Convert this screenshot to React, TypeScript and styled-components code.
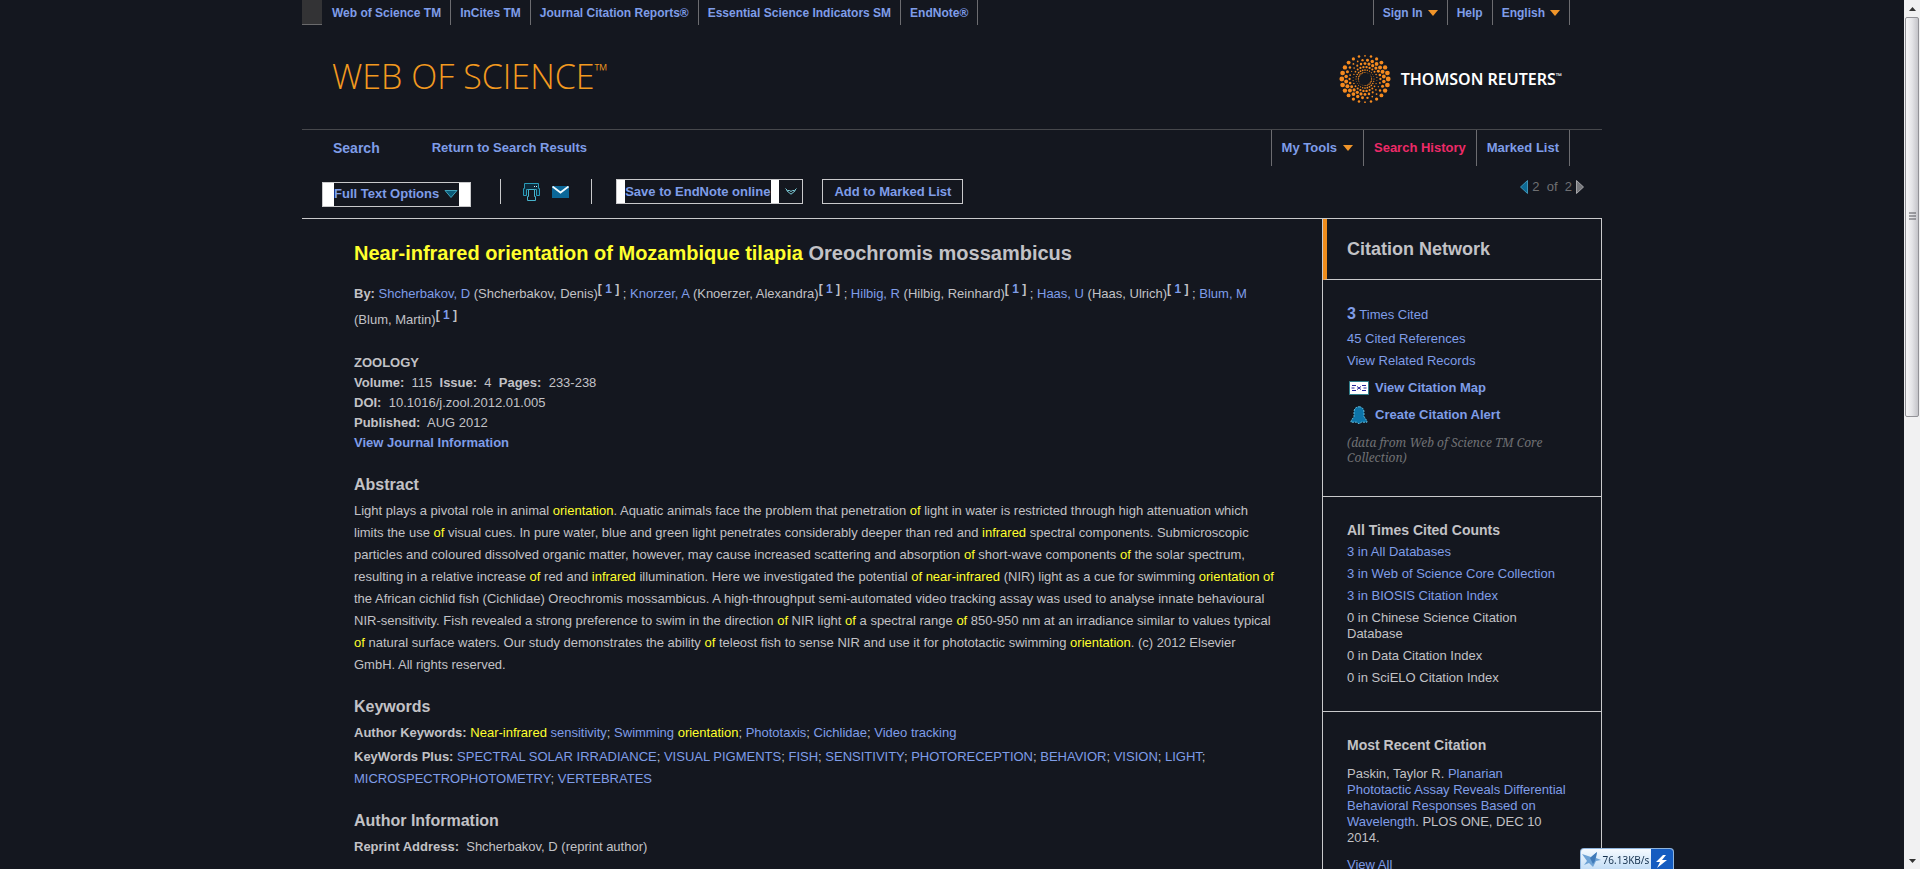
import React from "react";
import styled, { createGlobalStyle, css } from "styled-components";

const link = "#7f9de8";
const line = "#c9c9cb";
const dim = "#6f7073";

const GlobalStyle = createGlobalStyle`
  *, *::before, *::after { box-sizing: border-box; }
  body {
    margin: 0;
    background: #14171f;
    color: #c2c2c6;
    font: 13px/20px "Liberation Sans", Arial, sans-serif;
  }
  a { color: ${link}; text-decoration: none; }
  button { font: inherit; color: inherit; background: none; border: 0; padding: 0; cursor: pointer; }
  h1, h2, h3, p, ul { margin: 0; padding: 0; }
  ul { list-style: none; }
`;

const Window = styled.div`
  display: grid;
  grid-template-columns: minmax(0, 1fr) 16px;
  height: 100vh;
  overflow: hidden;
`;

const Viewport = styled.div`
  overflow: hidden;
`;

const Page = styled.div`
  width: 100%;
  max-width: 1300px;
  margin: 0 auto;
`;

const barItem = css`
  display: flex;
  align-items: center;
  gap: 6px;
  padding: 0 10px;
  color: ${link};
  white-space: nowrap;
  border-right: 1px solid #6c6c70;
`;

const BarLink = styled.a`
  ${barItem}
`;

const BarButton = styled.button`
  ${barItem}
`;

const TopBar = styled.div`
  display: flex;
  height: 25px;
  font-size: 12px;
  font-weight: bold;

  ${BarLink}, ${BarButton} {
    gap: 5px;
    padding: 0 9px;
  }
`;

const TopStub = styled.span`
  width: 20px;
  margin-right: 1px;
  background: #333335;
  border-bottom: 1px solid #6a6a6c;
`;

const RightGroup = styled.div`
  display: flex;
  margin-left: auto;
  margin-right: 32px;
  border-left: 1px solid #6c6c70;
`;

const Masthead = styled.header`
  display: flex;
  justify-content: space-between;
  align-items: flex-start;
  height: 105px;
  padding: 28px 40px 0 30px;
  border-bottom: 1px solid #47484c;
`;

const Product = styled.div`
  display: flex;
  color: #f39a1f;
  font: 300 34px/46px "Open Sans", "Noto Sans", sans-serif;

  sup { font-size: 18px; line-height: 34px; }
`;

const Company = styled.div`
  display: flex;
  align-items: center;
  gap: 10px;
  color: #fff;
  font: 600 16px/20px "Noto Sans", "Open Sans", sans-serif;

  sup { font-size: 8px; line-height: 8px; }
`;

const Nav = styled.nav`
  display: flex;
  height: 36px;
  font-weight: bold;
`;

const NavLink = styled.a<{ $size?: number }>`
  display: flex;
  align-items: center;
  margin-right: 52px;
  font-size: ${(p) => p.$size ?? 13}px;

  &:first-child { margin-left: 31px; }
`;

const HistoryLink = styled(BarLink)`
  color: #ee2a68;
`;

const Toolbar = styled.div`
  display: flex;
  align-items: center;
  height: 53px;
  padding: 0 18px 1px 20px;
  color: ${link};
  font-weight: bold;
  border-bottom: 1px solid ${line};
`;

const Box = styled.div`
  display: flex;
  height: 25px;
  border: 1px solid ${line};
`;

const FullText = styled(Box)`
  margin-top: 5px;
`;

const Blocked = styled.button<{ $edge: number }>`
  display: flex;
  align-items: center;
  gap: 5px;
  padding: 0 1px 0 0;
  white-space: nowrap;
  border: solid #fff;
  border-width: 0 ${(p) => p.$edge}px;
`;

const SplitArrow = styled.button`
  display: grid;
  place-items: center;
  width: 23px;
`;

const PlainButton = styled.button`
  padding: 0 11px;
  white-space: nowrap;
`;

const IconGroup = styled.div`
  display: flex;
  align-items: center;
  gap: 12px;
  height: 25px;
  margin: 0 24px 0 29px;
  padding: 0 22px;
  border: solid ${line};
  border-width: 0 1px;
`;

const IconButton = styled.button`
  display: flex;
`;

const SaveBox = styled(Box)`
  margin-right: 19px;
`;

const Pager = styled.div`
  display: flex;
  align-items: center;
  gap: 4px;
  margin: 0 0 10px auto;
  color: ${dim};
  font-weight: normal;
  white-space: pre;
`;

const Columns = styled.div`
  display: grid;
  grid-template-columns: minmax(0, 1fr) 280px;
`;

const Article = styled.main`
  padding: 22px 44px 0 52px;
`;

const Title = styled.h1`
  font-size: 20px;
  line-height: 24px;
`;

const Mark = styled.span`
  color: #ffff2e;
`;

const Authors = styled.p`
  margin-top: 16px;
  line-height: 26px;

  sup {
    font-size: 12px;
    line-height: 12px;
    font-weight: bold;
    white-space: pre;
  }
`;

const Source = styled.div`
  margin-top: 20px;
  padding-bottom: 1px;
  white-space: pre-wrap;

  a { font-weight: bold; }
`;

const Section = styled.section`
  margin-top: 11px;
  line-height: 22px;
`;

const SectionTitle = styled.h2`
  font-size: 16px;
  line-height: 24px;
  padding-top: 8px;
  margin-bottom: 3px;
`;

const KeywordLine = styled.p`
  & + & { margin-top: 2px; }
`;

const Sidebar = styled.aside`
  min-height: 100vh;
  border: solid ${line};
  border-width: 0 1px;
`;

const SideHead = styled.h2`
  padding: 18px 20px;
  font-size: 18px;
  line-height: 24px;
  border-left: 4px solid #ee8c1c;
  border-bottom: 1px solid ${line};
`;

const SideSection = styled.section`
  padding: 24px 32px 25px 24px;
  line-height: 16px;
  border-bottom: 1px solid ${line};
`;

const SideTitle = styled.h3<{ $gap: number }>`
  font-size: 14px;
  line-height: 18px;
  margin-bottom: ${(p) => p.$gap}px;
`;

const SideList = styled.ul`
  display: grid;
  gap: 6px;

  & + & { margin-top: 8px; }
`;

const TimesCited = styled.li`
  padding: 1px 0 2px;

  strong {
    font-size: 16px;
    line-height: 18px;
  }
`;

const IconLink = styled.a`
  display: flex;
  align-items: center;
  gap: 6px;
  height: 21px;
  padding-left: 2px;
  font-weight: bold;
`;

const DataNote = styled.p`
  margin: 10px 0 6px;
  color: ${dim};
  font: italic 12px/15px "Noto Serif", "DejaVu Serif", "Liberation Serif", serif;
`;

const Recent = styled.p`
  margin-bottom: 11px;
`;

const ScrollTrack = styled.div`
  display: flex;
  flex-direction: column;
  align-items: center;
  justify-content: space-between;
  background: #f1f1f2;
`;

const ScrollThumb = styled.div`
  display: grid;
  place-items: center;
  width: 14px;
  height: 46%;
  margin-bottom: auto;
  background: linear-gradient(90deg, #f6f6f7, #e4e4e7 50%, #c4c4c9);
  border: 1px solid #929297;
  border-radius: 2px;
`;

const ArrowCell = styled.span`
  display: grid;
  place-items: center;
  height: 17px;
`;

const SpeedBadge = styled.div`
  position: fixed;
  right: 246px;
  bottom: 0;
  display: flex;
  justify-content: space-between;
  width: 94px;
  height: 21px;
  overflow: hidden;
  color: #16324f;
  font: 10px/22px "Noto Sans", sans-serif;
  background: linear-gradient(#f5faff, #c4def6);
  border: 1px solid #8fb4dc;
  border-bottom: 0;
  border-radius: 4px 4px 0 0;
`;

const Caret = () => (
  <svg width="10" height="6" viewBox="0 0 10 6" aria-hidden="true">
    <path d="M0 0h10L5 6z" fill="#f0952a" />
  </svg>
);

const rings = [
  { r: 6.6, s: 0.7 },
  { r: 9, s: 0.9 },
  { r: 12, s: 1.2 },
  { r: 15.4, s: 1.6 },
  { r: 19, s: 2 },
  { r: 23.2, s: 2.4 },
];

const Sunburst = () => (
  <svg width="52" height="52" viewBox="-26 -26 52 52" aria-hidden="true">
    {rings.map(({ r, s }, k) =>
      Array.from({ length: 24 }, (_, i) => {
        const a = ((i + (k % 2 ? 0 : 0.5)) / 24) * Math.PI * 2;
        const swing = Math.abs(Math.cos(a + (5 - k) * 0.5));
        return (
          <circle
            key={`${k}-${i}`}
            cx={r * Math.cos(a)}
            cy={r * Math.sin(a)}
            r={s * (0.36 + 0.64 * swing)}
            fill="#f58a1f"
          />
        );
      })
    )}
  </svg>
);

const PrintIcon = () => (
  <svg width="17" height="18" viewBox="0 0 17 18" fill="none" stroke="#2a9bb8" aria-hidden="true">
    <path d="M1.500 .5h14v5h1v7h-3v-6h-10v6h-3v-7h1z" fill="#0e2c3c" />
    <path d="M5.500 6.500h6v7h1v4h-8v-4h1z" fill="#14171f" stroke="#48b3cc" />
    <path d="M11 3.500h1M13 3.500h1" stroke="#d8f4fb" />
  </svg>
);

const MailIcon = () => (
  <svg width="17" height="12" viewBox="0 0 17 12" aria-hidden="true">
    <path d="M0 0h17v12H0z" fill="#0b6798" />
    <path d="M.5 .5l8 6 8-6" fill="none" stroke="#f2fbff" strokeWidth="1.800" />
  </svg>
);

const MapIcon = () => (
  <svg width="20" height="14" viewBox="0 0 20 14" aria-hidden="true">
    <path d="M.5.5h19v13H.5z" fill="#fff" stroke="#2f7f8c" />
    <path d="M3 4.500h4M2.500 7h3M3 9.500h4M13 4.500h4M14.500 7h3M13 9.500h4" stroke="#26269a" />
    <path d="M8 5.500l4 3M12 5.500l-4 3" stroke="#26269a" fill="none" />
  </svg>
);

const BellIcon = () => (
  <svg width="20" height="18" viewBox="-1 0 20 18" aria-hidden="true">
    <path
      d="M9 .8c3.200 0 5 2.200 5 5.200v4.500l3 4.500v1.200h-5.500L9 17.800l-2.500-1.600H1V15l3-4.500V6C4 3 5.800.8 9 .8z"
      fill="#0d74a8"
      stroke="#63b9d8"
      strokeDasharray="2 1"
    />
  </svg>
);

const BirdIcon = () => (
  <svg width="20" height="20" viewBox="0 0 20 20" aria-hidden="true">
    <path d="M1 5l9 3 6-5-1 6 5 2-5 1-3 6-4-4-5 2 3-4z" fill="#6ea3d6" />
    <path d="M9 9l7-6-2 9-2 3z" fill="#3f79b8" />
  </svg>
);

const BoltIcon = () => (
  <svg width="22" height="21" viewBox="0 0 22 21" aria-hidden="true">
    <path d="M0 0h22v21H0z" fill="#155cc0" />
    <path d="M12 6l-7 7h4l-3 6 10-8h-5l4-5z" fill="#fff" />
  </svg>
);

const PageArrow = ({ back }: { back?: boolean }) => (
  <svg width="8" height="14" viewBox="0 0 8 14" aria-hidden="true">
    {back ? (
      <path d="M7.500 .5v13L.5 7z" fill="#0d6a94" stroke="#3f93b5" />
    ) : (
      <path d="M.5.5v13l7-6.500z" fill="#77787c" stroke="#a5a5a8" />
    )}
  </svg>
);

const products = [
  "Web of Science TM",
  "InCites TM",
  "Journal Citation Reports®",
  "Essential Science Indicators SM",
  "EndNote®",
];

const authors = [
  ["Shcherbakov, D", "Shcherbakov, Denis"],
  ["Knorzer, A", "Knoerzer, Alexandra"],
  ["Hilbig, R", "Hilbig, Reinhard"],
  ["Haas, U", "Haas, Ulrich"],
  ["Blum, M", "Blum, Martin"],
];

const abstract =
  "Light plays a pivotal role in animal *orientation*. Aquatic animals face the problem that penetration *of* light in water is restricted through high attenuation which limits the use *of* visual cues. In pure water, blue and green light penetrates considerably deeper than red and *infrared* spectral components. Submicroscopic particles and coloured dissolved organic matter, however, may cause increased scattering and absorption *of* short-wave components *of* the solar spectrum, resulting in a relative increase *of* red and *infrared* illumination. Here we investigated the potential *of near-infrared* (NIR) light as a cue for swimming *orientation of* the African cichlid fish (Cichlidae) Oreochromis mossambicus. A high-throughput semi-automated video tracking assay was used to analyse innate behavioural NIR-sensitivity. Fish revealed a strong preference to swim in the direction *of* NIR light *of* a spectral range *of* 850-950 nm at an irradiance similar to values typical *of* natural surface waters. Our study demonstrates the ability *of* teleost fish to sense NIR and use it for phototactic swimming *orientation*. (c) 2012 Elsevier GmbH. All rights reserved.";

const marked = (text: string) =>
  text.split("*").map((part, i) => (i % 2 ? <Mark key={i}>{part}</Mark> : part));

const authorKeywords = [
  "*Near-infrared* sensitivity",
  "Swimming *orientation*",
  "Phototaxis",
  "Cichlidae",
  "Video tracking",
];

const keywordsPlus = [
  "SPECTRAL SOLAR IRRADIANCE",
  "VISUAL PIGMENTS",
  "FISH",
  "SENSITIVITY",
  "PHOTORECEPTION",
  "BEHAVIOR",
  "VISION",
  "LIGHT",
  "MICROSPECTROPHOTOMETRY",
  "VERTEBRATES",
];

const Keywords = ({ label, items }: { label: string; items: string[] }) => (
  <KeywordLine>
    <b>{label}</b>{" "}
    {items.map((item, i) => (
      <React.Fragment key={item}>
        {i > 0 && "; "}
        <a href="#keyword">{marked(item)}</a>
      </React.Fragment>
    ))}
  </KeywordLine>
);

export default function App() {
  return (
    <Window>
      <GlobalStyle />
      <Viewport>
        <Page>
          <TopBar>
            <TopStub />
            {products.map((name) => (
              <BarLink key={name} href="#product">{name}</BarLink>
            ))}
            <RightGroup>
              <BarButton>Sign In <Caret /></BarButton>
              <BarLink href="#help">Help</BarLink>
              <BarButton>English <Caret /></BarButton>
            </RightGroup>
          </TopBar>
          <Masthead>
            <Product>WEB OF SCIENCE<sup>™</sup></Product>
            <Company>
              <Sunburst />
              <span>THOMSON REUTERS<sup>™</sup></span>
            </Company>
          </Masthead>
          <Nav>
            <NavLink href="#search" $size={14}>Search</NavLink>
            <NavLink href="#results">Return to Search Results</NavLink>
            <RightGroup>
              <BarButton>My Tools <Caret /></BarButton>
              <HistoryLink href="#history">Search History</HistoryLink>
              <BarLink href="#marked">Marked List</BarLink>
            </RightGroup>
          </Nav>
          <Toolbar>
            <FullText>
              <Blocked $edge={11}>
                Full Text Options
                <svg width="14" height="8" viewBox="0 0 14 8" aria-hidden="true">
                  <path d="M1 .5h12L7 7.500z" fill="#0b5a78" stroke="#3fa0b8" />
                </svg>
              </Blocked>
            </FullText>
            <IconGroup>
              <IconButton aria-label="Print"><PrintIcon /></IconButton>
              <IconButton aria-label="Email"><MailIcon /></IconButton>
            </IconGroup>
            <SaveBox>
              <Blocked $edge={8}>Save to EndNote online</Blocked>
              <SplitArrow aria-label="More save options">
                <svg width="12" height="7" viewBox="0 0 12 7" fill="none" aria-hidden="true">
                  <path d="M.5 .5l2 2h2L6 3.500l1.500-1h2l2-2M1.500 2.500L6 6.200l4.500-3.700" stroke="#7fd0dc" />
                </svg>
              </SplitArrow>
            </SaveBox>
            <Box>
              <PlainButton>Add to Marked List</PlainButton>
            </Box>
            <Pager>
              <IconButton aria-label="Previous record"><PageArrow back /></IconButton>
              <span>{"2  of  2"}</span>
              <IconButton aria-label="Next record"><PageArrow /></IconButton>
            </Pager>
          </Toolbar>
          <Columns>
            <Article>
              <Title>
                <Mark>Near-infrared orientation of Mozambique tilapia</Mark> Oreochromis mossambicus
              </Title>
              <Authors>
                <b>By:</b>{" "}
                {authors.map(([short, full], i) => (
                  <React.Fragment key={short}>
                    {i > 0 && " ; "}
                    <a href="#author">{short}</a> ({full})
                    <sup>[ <a href="#address">1</a> ]</sup>
                  </React.Fragment>
                ))}
              </Authors>
              <Source>
                <p><b>ZOOLOGY</b></p>
                <p><b>Volume:</b>{"  115  "}<b>Issue:</b>{"  4  "}<b>Pages:</b>{"  233-238"}</p>
                <p><b>DOI:</b>{"  10.1016/j.zool.2012.01.005"}</p>
                <p><b>Published:</b>{"  AUG 2012"}</p>
                <p><a href="#journal">View Journal Information</a></p>
              </Source>
              <Section>
                <SectionTitle>Abstract</SectionTitle>
                <p>{marked(abstract)}</p>
              </Section>
              <Section>
                <SectionTitle>Keywords</SectionTitle>
                <Keywords label="Author Keywords:" items={authorKeywords} />
                <Keywords label="KeyWords Plus:" items={keywordsPlus} />
              </Section>
              <Section>
                <SectionTitle>Author Information</SectionTitle>
                <p><b>Reprint Address:</b>&nbsp; Shcherbakov, D (reprint author)</p>
              </Section>
            </Article>
            <Sidebar>
              <SideHead>Citation Network</SideHead>
              <SideSection>
                <SideList>
                  <TimesCited><a href="#cited"><strong>3</strong> Times Cited</a></TimesCited>
                  <li><a href="#references">45 Cited References</a></li>
                  <li><a href="#related">View Related Records</a></li>
                </SideList>
                <SideList>
                  <li><IconLink href="#map"><MapIcon />View Citation Map</IconLink></li>
                  <li><IconLink href="#alert"><BellIcon />Create Citation Alert</IconLink></li>
                </SideList>
                <DataNote>(data from Web of Science TM Core Collection)</DataNote>
              </SideSection>
              <SideSection>
                <SideTitle $gap={5}>All Times Cited Counts</SideTitle>
                <SideList>
                  <li><a href="#all">3 in All Databases</a></li>
                  <li><a href="#core">3 in Web of Science Core Collection</a></li>
                  <li><a href="#biosis">3 in BIOSIS Citation Index</a></li>
                  <li>0 in Chinese Science Citation Database</li>
                  <li>0 in Data Citation Index</li>
                  <li>0 in SciELO Citation Index</li>
                </SideList>
              </SideSection>
              <SideSection>
                <SideTitle $gap={12}>Most Recent Citation</SideTitle>
                <Recent>
                  Paskin, Taylor R. <a href="#recent">Planarian Phototactic Assay Reveals Differential Behavioral Responses Based on Wavelength</a>. PLOS ONE, DEC 10 2014.
                </Recent>
                <a href="#view-all">View All</a>
              </SideSection>
            </Sidebar>
          </Columns>
        </Page>
      </Viewport>
      <ScrollTrack aria-hidden="true">
        <ArrowCell>
          <svg width="7" height="4" viewBox="0 0 7 4"><path d="M0 4h7L3.500 0z" fill="#333" /></svg>
        </ArrowCell>
        <ScrollThumb>
          <svg width="7" height="9" viewBox="0 0 7 9"><path d="M0 1h7M0 4h7M0 7h7" stroke="#55555a" /></svg>
        </ScrollThumb>
        <ArrowCell>
          <svg width="7" height="4" viewBox="0 0 7 4"><path d="M0 0h7L3.500 4z" fill="#333" /></svg>
        </ArrowCell>
      </ScrollTrack>
      <SpeedBadge>
        <BirdIcon />
        <span>76.13KB/s</span>
        <BoltIcon />
      </SpeedBadge>
    </Window>
  );
}
